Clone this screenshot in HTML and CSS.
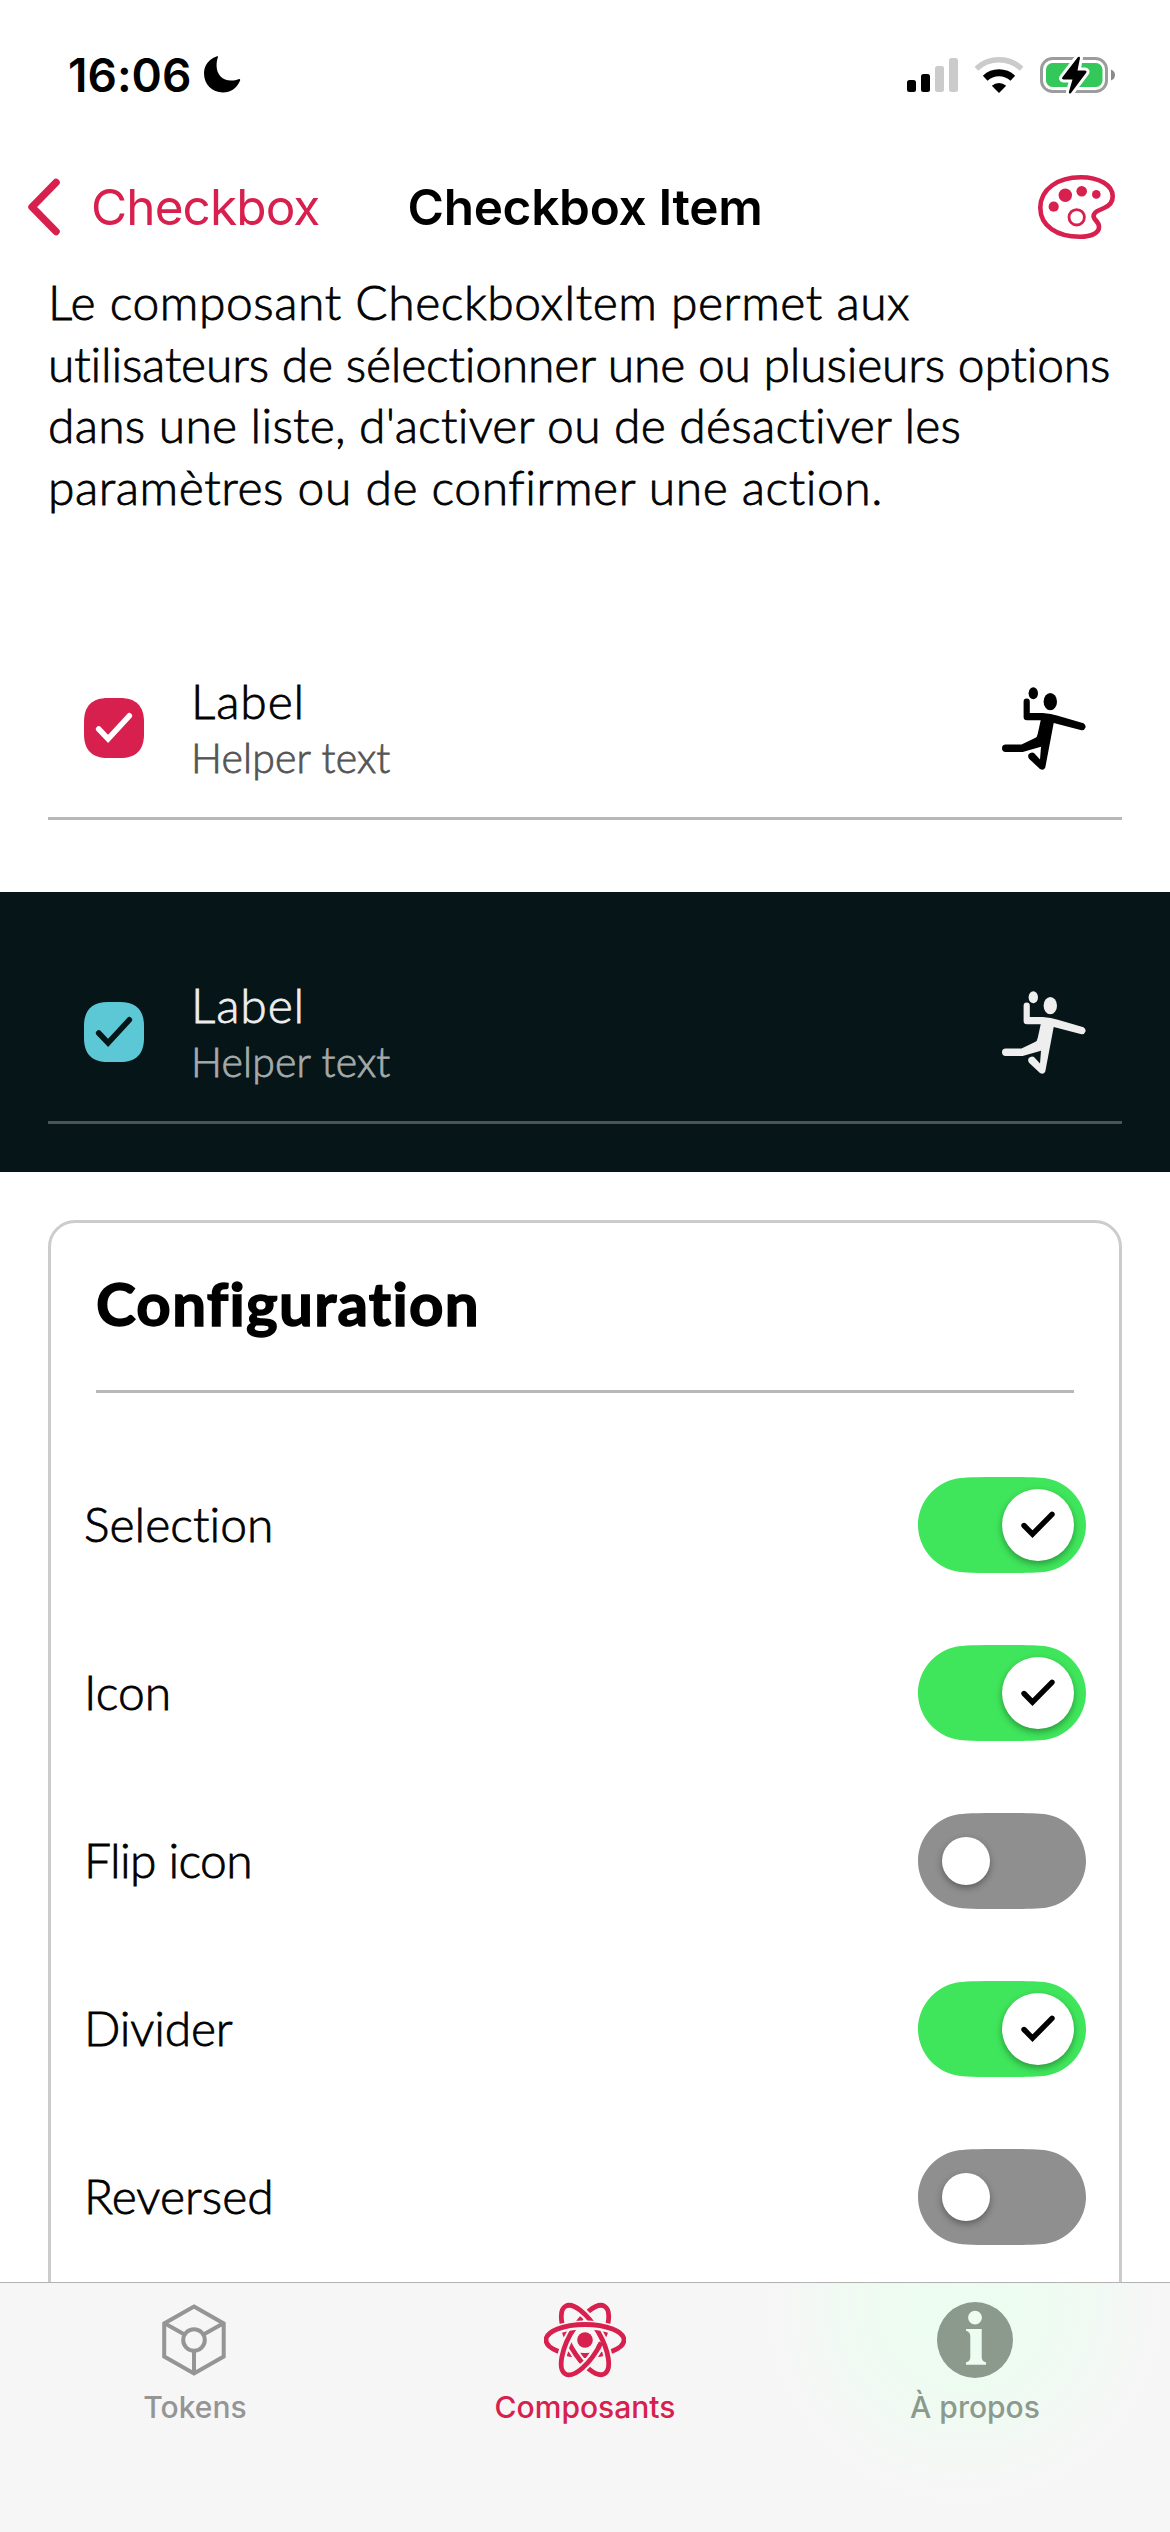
FILE: index.html
```html
<!DOCTYPE html>
<html lang="fr">
<head>
<meta charset="utf-8">
<title>Checkbox Item</title>
<link rel="stylesheet" href="styles.css">
</head>
<body>
<svg class="defs" width="0" height="0">
  <defs>
    <symbol id="player" viewBox="0 0 84 83">
      <ellipse cx="31.3" cy="6.3" rx="4.7" ry="6"/>
      <ellipse cx="48.3" cy="14.7" rx="6.7" ry="8.6"/>
      <path d="M21.6 14.7a3.1 3.3 0 0 1 6.2 0V26H38C45 26 49 27 55 28.6L81.500 36.200Q84 37.500 83.500 40.500Q82.500 43.500 79.500 43.200L51.700 36L43.300 80.500Q41.500 84 38 82L27.300 72Q25.300 69.500 26.800 67Q29.500 64.600 32 66L38 72.600L39 59.700L20.700 65H3.700a3.700 3.700 0 0 1 0-7.400H19.500L33 51Q35.300 50 35.700 47L38.700 33.300H25Q21.600 33.300 21.600 30Z"/>
    </symbol>
    <symbol id="box" viewBox="0 0 60 60">
      <path d="M24 0H36C52 0 60 8 60 24V36C60 52 52 60 36 60H24C8 60 0 52 0 36V24C0 8 8 0 24 0Z"/>
      <path class="tick" d="M14.700 31L24.100 41L45.300 17.800"/>
    </symbol>
    <symbol id="track" viewBox="0 0 168 96">
      <path d="M84 0C108 0 124 .300 130 1.800C152 6 168 26 168 48S152 90 130 94.200C124 95.700 108 96 84 96S44 95.700 38 94.200C16 90 0 70 0 48S16 6 38 1.800C44 .300 60 0 84 0Z"/>
    </symbol>
  </defs>
</svg>
<div class="screen">
  <div class="status">
    <div class="clock"><span class="time">16:06</span>
      <svg width="37" height="37" viewBox="0 0 37 37"><path d="M12 .7C14.600-.300 14.300 .800 13.500 2.500C12.800 5 12.600 7 12.600 10C12.600 18.500 18.500 24.500 27 24.500C30 24.500 32.500 24 34.500 23.200C36 22.800 36.500 23.500 36 24.700C33 32 26.500 36.500 19 36.500C8 36.500 0 28 0 17.500C0 9.500 5 3 12 .7Z"/></svg>
    </div>
    <div class="indicators">
      <svg width="51" height="34" viewBox="0 0 51 34"><rect y="22" width="9" height="12" rx="2.500"/><rect x="14" y="16" width="9" height="18" rx="2.500"/><g fill="#cbcbcb"><rect x="28" y="8" width="9" height="26" rx="2.500"/><rect x="42" width="9" height="34" rx="2.500"/></g></svg>
      <svg width="48" height="36" viewBox="0 0 48 36"><path d="M1.300 11.700A33.300 33.300 0 0 1 46.700 11.700" fill="none" stroke="#cbcbcb" stroke-width="5.500"/><path d="M10.200 21.200A20.200 20.200 0 0 1 37.800 21.200" fill="none" stroke="#000" stroke-width="6.800"/><path d="M24 36L16.800 28.700A11 11 0 0 1 31.200 28.700Z"/></svg>
      <svg width="76" height="38" viewBox="0 -1 76 38"><rect x="1.500" y="1.500" width="65" height="33" rx="11" fill="none" stroke="#9c9c9c" stroke-width="3"/><path d="M71 12.500Q75 14 75 18T71 23.500Z" fill="#8a8a8a"/><rect x="6" y="6" width="56.500" height="24" rx="6.500" fill="#34c759"/><path class="halo" d="M38 0Q40.500-1 39.800 2L37.500 13.500H45Q47.500 14 46 16L31 36Q28.500 37.500 29 34.500L32.500 22.500H23.500Q21 22 22.600 20Z"/><path d="M38 0Q40.500-1 39.800 2L37.500 13.500H45Q47.500 14 46 16L31 36Q28.500 37.500 29 34.500L32.500 22.500H23.500Q21 22 22.600 20Z"/></svg>
    </div>
  </div>
  <div class="nav">
    <div class="back">
      <svg width="34" height="58" viewBox="0 0 34 58"><path d="M29 4.500L5 29L29 53.500" fill="none" stroke="currentColor" stroke-width="7.500" stroke-linecap="round" stroke-linejoin="round"/></svg>
      <span>Checkbox</span>
    </div>
    <div class="title">Checkbox Item</div>
    <svg class="palette" width="78" height="65" viewBox="0 0 78 65"><path d="M2.300 32.700C2.300 14 20 2.300 42.700 2.300C61 2.300 74.700 10 74.700 21.500C74.700 27 72 30.500 66 33L59.500 36C55 38.500 54.500 42 57.500 45C60 47.500 61 49.500 61 52.300C61 58 53.500 61.700 42 61.700C19 61.700 2.300 51 2.300 32.700Z" fill="none" stroke="currentColor" stroke-width="4.600"/><g fill="currentColor"><circle cx="15.700" cy="31.700" r="5.100"/><circle cx="27.300" cy="20.200" r="6.700"/><circle cx="43.700" cy="16.200" r="5.300"/><circle cx="58.300" cy="19.400" r="4.300"/></g><circle cx="38.700" cy="42.300" r="7.700" fill="none" stroke="currentColor" stroke-width="2.800"/></svg>
  </div>
  <div class="content">
    <p class="intro"><span class="wide">Le composant CheckboxItem permet aux</span><br><span class="tight">utilisateurs de sélectionner une ou plusieurs options</span><br><span class="loose">dans une liste, d'activer ou de désactiver les</span><br><span class="wide">paramètres ou de confirmer une action.</span></p>
    <div class="item light">
      <svg class="box" width="60" height="60"><use href="#box"/></svg>
      <div class="texts"><div class="label">Label</div><div class="helper">Helper text</div></div>
      <svg class="player" width="84" height="83"><use href="#player"/></svg>
    </div>
    <div class="darkzone">
      <div class="item dark">
        <svg class="box" width="60" height="60"><use href="#box"/></svg>
        <div class="texts"><div class="label">Label</div><div class="helper">Helper text</div></div>
        <svg class="player" width="84" height="83"><use href="#player"/></svg>
      </div>
    </div>
    <div class="card">
      <h2 class="heading">Configuration</h2>
      <div class="row"><span>Selection</span><div class="toggle on"><svg width="168" height="96"><use href="#track"/></svg><div class="knob"><svg width="36" height="30" viewBox="0 0 36 30"><path d="M4 15.500L12.500 24.200L32 4.300"/></svg></div></div></div>
      <div class="row"><span>Icon</span><div class="toggle on"><svg width="168" height="96"><use href="#track"/></svg><div class="knob"><svg width="36" height="30" viewBox="0 0 36 30"><path d="M4 15.500L12.500 24.200L32 4.300"/></svg></div></div></div>
      <div class="row"><span class="flip">Flip icon</span><div class="toggle"><svg width="168" height="96"><use href="#track"/></svg><div class="knob"></div></div></div>
      <div class="row"><span class="tight">Divider</span><div class="toggle on"><svg width="168" height="96"><use href="#track"/></svg><div class="knob"><svg width="36" height="30" viewBox="0 0 36 30"><path d="M4 15.500L12.500 24.200L32 4.300"/></svg></div></div></div>
      <div class="row"><span>Reversed</span><div class="toggle"><svg width="168" height="96"><use href="#track"/></svg><div class="knob"></div></div></div>
    </div>
  </div>
  <div class="tabs">
    <div class="tab">
      <svg width="82" height="76" viewBox="-8 -2 82 76" fill="none" stroke="currentColor" stroke-width="4"><path d="M32 2.500L61.700 19.500V52.500L32 69.500L2.200 52.500V19.500ZM3 19.500L22.500 30.500M61 19.500L41.500 30.500M32 47V69"/><circle cx="32" cy="36" r="10.800"/></svg>
      <span>Tokens</span>
    </div>
    <div class="tab active">
      <svg width="82" height="76" viewBox="-41 -38 82 76" fill="none" stroke-width="4.800">
        <path class="orbit" d="M-39 0A39 15.500 0 0 0 39 0"/>
        <g transform="rotate(-60)"><ellipse class="gap" rx="39" ry="15.500"/><ellipse class="orbit" rx="39" ry="15.500"/></g>
        <g transform="rotate(60)"><ellipse class="gap" rx="39" ry="15.500"/><ellipse class="orbit" rx="39" ry="15.500"/></g>
        <g transform="rotate(-60)"><path class="gap" d="M0-15.500A39 15.500 0 0 0 0 15.500"/><path class="orbit" d="M6-15.300A39 15.500 0 1 0 6 15.300"/></g>
        <path class="gap" d="M-38 -3A39 15.500 0 0 1 38 -3"/><path class="orbit" d="M-39 0A39 15.500 0 0 1 39 0"/>
        <circle r="7.800" fill="currentColor"/>
      </svg>
      <span>Composants</span>
    </div>
    <div class="tab about">
      <svg width="76" height="76" viewBox="0 0 76 76"><path fill="currentColor" fill-rule="evenodd" d="M38 0A38 38 0 1 1 38 76A38 38 0 1 1 38 0ZM38 8.800A6.900 6.900 0 1 0 38 22.600A6.900 6.900 0 1 0 38 8.800ZM29 27H44.700V55Q44.700 59.500 49 60.300V62.700H29V60.300Q33.300 59.500 33.300 55V34Q33.300 30 29 28.800Z"/></svg>
      <span>À propos</span>
    </div>
  </div>
</div>
</body>
</html>
```
FILE: styles.css
```css
* { box-sizing: border-box; }
body { margin: 0; background: #fff; color: #000; }
.defs { position: absolute; }
svg { display: block; flex: none; }
.screen {
  width: 1170px; height: 2532px; overflow: hidden;
  display: flex; flex-direction: column;
  font-family: Lato, "Open Sans", sans-serif; font-weight: 300;
  font-variant-ligatures: none;
}
.status {
  height: 149px; flex: none; padding: 0 54px 0 68px;
  display: flex; justify-content: space-between; align-items: center;
  font-family: Inter, sans-serif;
}
.clock { display: flex; align-items: center; gap: 13px; }
.time { font-size: 46px; font-weight: 600; line-height: 60px; }
.indicators { display: flex; align-items: center; gap: 17px; }
.halo { stroke: #fff; stroke-width: 6; }
.nav {
  height: 116px; flex: none; padding: 0 27px; color: #d7204d;
  display: grid; grid-template-columns: 1fr auto 1fr; align-items: center;
  font-family: Inter, sans-serif; font-size: 49.500px; line-height: 60px;
}
.nav span, .title { margin-top: -1px; }
.back { display: flex; align-items: center; gap: 30px; font-weight: 400; letter-spacing: -.900px; }
.title { color: #000; font-weight: 600; letter-spacing: -.300px; }
.palette { justify-self: end; margin-right: 27px; }
.content { flex: 1; min-height: 0; overflow: hidden; }
.intro { margin: 6px 0 0 48px; font-size: 48px; line-height: 61.600px; white-space: nowrap; }
.intro, .label, .helper, .row { -webkit-text-stroke: .800px currentColor; }
.wide { letter-spacing: .550px; }
.loose { letter-spacing: .250px; }
.tight { letter-spacing: -.180px; }
.item {
  height: 180px; margin: 0 48px; padding: 0 36px;
  display: flex; align-items: center; border-bottom: 3px solid #b8b8b8;
}
.light { margin-top: 122.600px; }
.texts { margin: -3px 0 0 47px; flex: 1; }
.label { font-size: 48px; line-height: 62px; letter-spacing: .900px; }
.helper { font-size: 41px; line-height: 52px; letter-spacing: .150px; color: #555; }
.box { fill: #d7204d; margin-top: -1px; }
.tick { fill: none; stroke: var(--tick, #fff); stroke-width: 5.600; stroke-linecap: round; }
.darkzone { margin-top: 72px; height: 280px; background: #061518; padding-top: 52px; }
.dark { color: #eee; border-color: #4a5556; }
.dark .helper { color: #a5aaaa; }
.dark .box { fill: #5dc8d5; --tick: #061518; }
.dark .player { fill: #eee; }
.card {
  margin: 48px 48px 0; padding: 0 33px; height: 1400px;
  border: 3px solid #ccc; border-radius: 27px;
}
.heading {
  margin: 0 12px 48px; height: 170px; padding-top: 44px; letter-spacing: 1.300px;
  border-bottom: 3px solid #b8b8b8; font-size: 60px; line-height: 72px; font-weight: 700;
  -webkit-text-stroke: 1.500px currentColor;
}
.row { height: 168px; display: flex; justify-content: space-between; align-items: center; font-size: 48px; letter-spacing: .050px; }
.row > span { margin-top: -2px; }
.flip { letter-spacing: -.600px; }
.toggle { display: grid; fill: #8f8f8f; }
.toggle > * { grid-area: 1 / 1; }
.toggle.on { fill: #3fe65b; }
.knob {
  width: 48px; height: 48px; margin-left: 24px; align-self: center; border-radius: 50%;
  background: #fff; box-shadow: 0 3px 7px rgba(0, 0, 0, .35);
  display: flex; align-items: center; justify-content: center; position: relative;
}
.on .knob { width: 72px; height: 72px; margin-left: 84px; }
.knob path { fill: none; stroke: #000; stroke-width: 5.400; stroke-linecap: round; }
.tabs {
  height: 250px; flex: none; border-top: 1px solid #b2b2b2; padding-top: 19px;
  display: grid; grid-template-columns: repeat(3, 1fr);
  background: radial-gradient(ellipse 200px 200px at 965px 20px, #edfdf1, #eefbf1 45%, #f3f8f4 75%, rgba(246, 246, 246, 0)), #f6f6f6;
  font-family: Inter, sans-serif; font-size: 30px; font-weight: 500; line-height: 40px;
}
.tab { display: flex; flex-direction: column; align-items: center; gap: 9px; color: #959595; }
.active { color: #d7204d; }
.orbit { stroke: currentColor; }
.gap { stroke: #f6f6f6; stroke-width: 9; }
.about { color: #8b9a8d; }
```
